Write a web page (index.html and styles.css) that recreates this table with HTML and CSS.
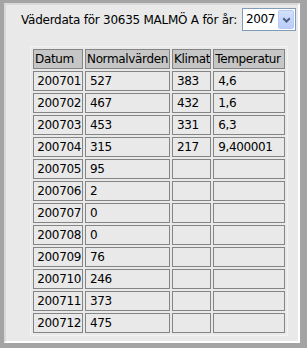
FILE: index.html
```html
<!DOCTYPE html>
<html>
<head>
<meta charset="utf-8">
<link rel="stylesheet" href="styles.css">
</head>
<body>
<div class="frame">
  <div class="inner">
    <div class="head">
      <span class="title">Väderdata för 30635 MALMÖ A för år:</span>
      <div class="select">
        <span class="val">2007</span>
        <span class="btn"><svg width="9" height="6" viewBox="0 0 9 6"><path d="M1.2 1.2 L4.5 4.5 L7.8 1.2" stroke="#4d6185" stroke-width="2" fill="none"/></svg></span>
      </div>
    </div>
    <table class="data">
      <tr><th class="c1">Datum</th><th class="c2">Normalvärden</th><th class="c3">Klimat</th><th class="c4">Temperatur</th></tr>
      <tr><td class="d">200701</td><td>527</td><td>383</td><td>4,6</td></tr>
      <tr><td class="d">200702</td><td>467</td><td>432</td><td>1,6</td></tr>
      <tr><td class="d">200703</td><td>453</td><td>331</td><td>6,3</td></tr>
      <tr><td class="d">200704</td><td>315</td><td>217</td><td>9,400001</td></tr>
      <tr><td class="d">200705</td><td>95</td><td></td><td></td></tr>
      <tr><td class="d">200706</td><td>2</td><td></td><td></td></tr>
      <tr><td class="d">200707</td><td>0</td><td></td><td></td></tr>
      <tr><td class="d">200708</td><td>0</td><td></td><td></td></tr>
      <tr><td class="d">200709</td><td>76</td><td></td><td></td></tr>
      <tr><td class="d">200710</td><td>246</td><td></td><td></td></tr>
      <tr><td class="d">200711</td><td>373</td><td></td><td></td></tr>
      <tr><td class="d">200712</td><td>475</td><td></td><td></td></tr>
    </table>
  </div>
</div>
</body>
</html>
```
FILE: styles.css
```css
html, body {
  margin: 0;
  padding: 0;
}
body {
  width: 307px;
  height: 348px;
  background: #a4a4a4;
  font-family: "DejaVu Sans", sans-serif;
  color: #000;
}
.frame {
  box-sizing: border-box;
  width: 307px;
  height: 348px;
  border-style: solid;
  border-color: #a4a4a4;
  border-width: 3px 7px 5px 4px;
}
.inner {
  box-sizing: border-box;
  height: 100%;
  border-style: solid;
  border-width: 2px;
  border-color: #d8d8d8 #ffffff #ffffff #d8d8d8;
  background: #e9e9e9;
  padding-top: 3px;
}
.head {
  display: flex;
  align-items: center;
  justify-content: space-between;
  padding: 0 2px 0 15px;
}
.title {
  font-size: 12px;
  letter-spacing: -0.25px;
  padding-top: 1px;
}
.select {
  box-sizing: border-box;
  width: 54px;
  height: 23px;
  border: 1px solid #7f9db9;
  background: #fff;
  display: flex;
  align-items: stretch;
  padding: 1px;
}
.val {
  flex: 1;
  font-size: 12px;
  letter-spacing: -0.4px;
  line-height: 19px;
  padding-left: 2px;
}
.btn {
  box-sizing: border-box;
  width: 16px;
  border: 1px solid #b9cbf5;
  border-radius: 2px;
  background: linear-gradient(#d3e0fd, #b9cdf9);
  display: flex;
  align-items: center;
  justify-content: center;
}
.btn svg {
  display: block;
}
.data {
  border-collapse: separate;
  border-spacing: 2px;
  border: 1px solid #f3f3f3;
  margin: 15px 0 0 24px;
  font-size: 12px;
  letter-spacing: -0.35px;
}
.data th, .data td {
  box-sizing: border-box;
  height: 20px;
  border: 1px solid #858585;
  padding: 0 0 0 1px;
  line-height: 18px;
  text-align: left;
  font-weight: normal;
  white-space: nowrap;
  overflow: hidden;
}
.data th {
  background: #c6c6c6;
}
.data td {
  background: #e9e9e9;
  padding-left: 4px;
}
.data td.d {
  text-align: right;
  padding-right: 1px;
  padding-left: 0;
}
.c1 { width: 50px; }
.c2 { width: 85px; }
.c3 { width: 39px; }
.c4 { width: 72px; }
```
